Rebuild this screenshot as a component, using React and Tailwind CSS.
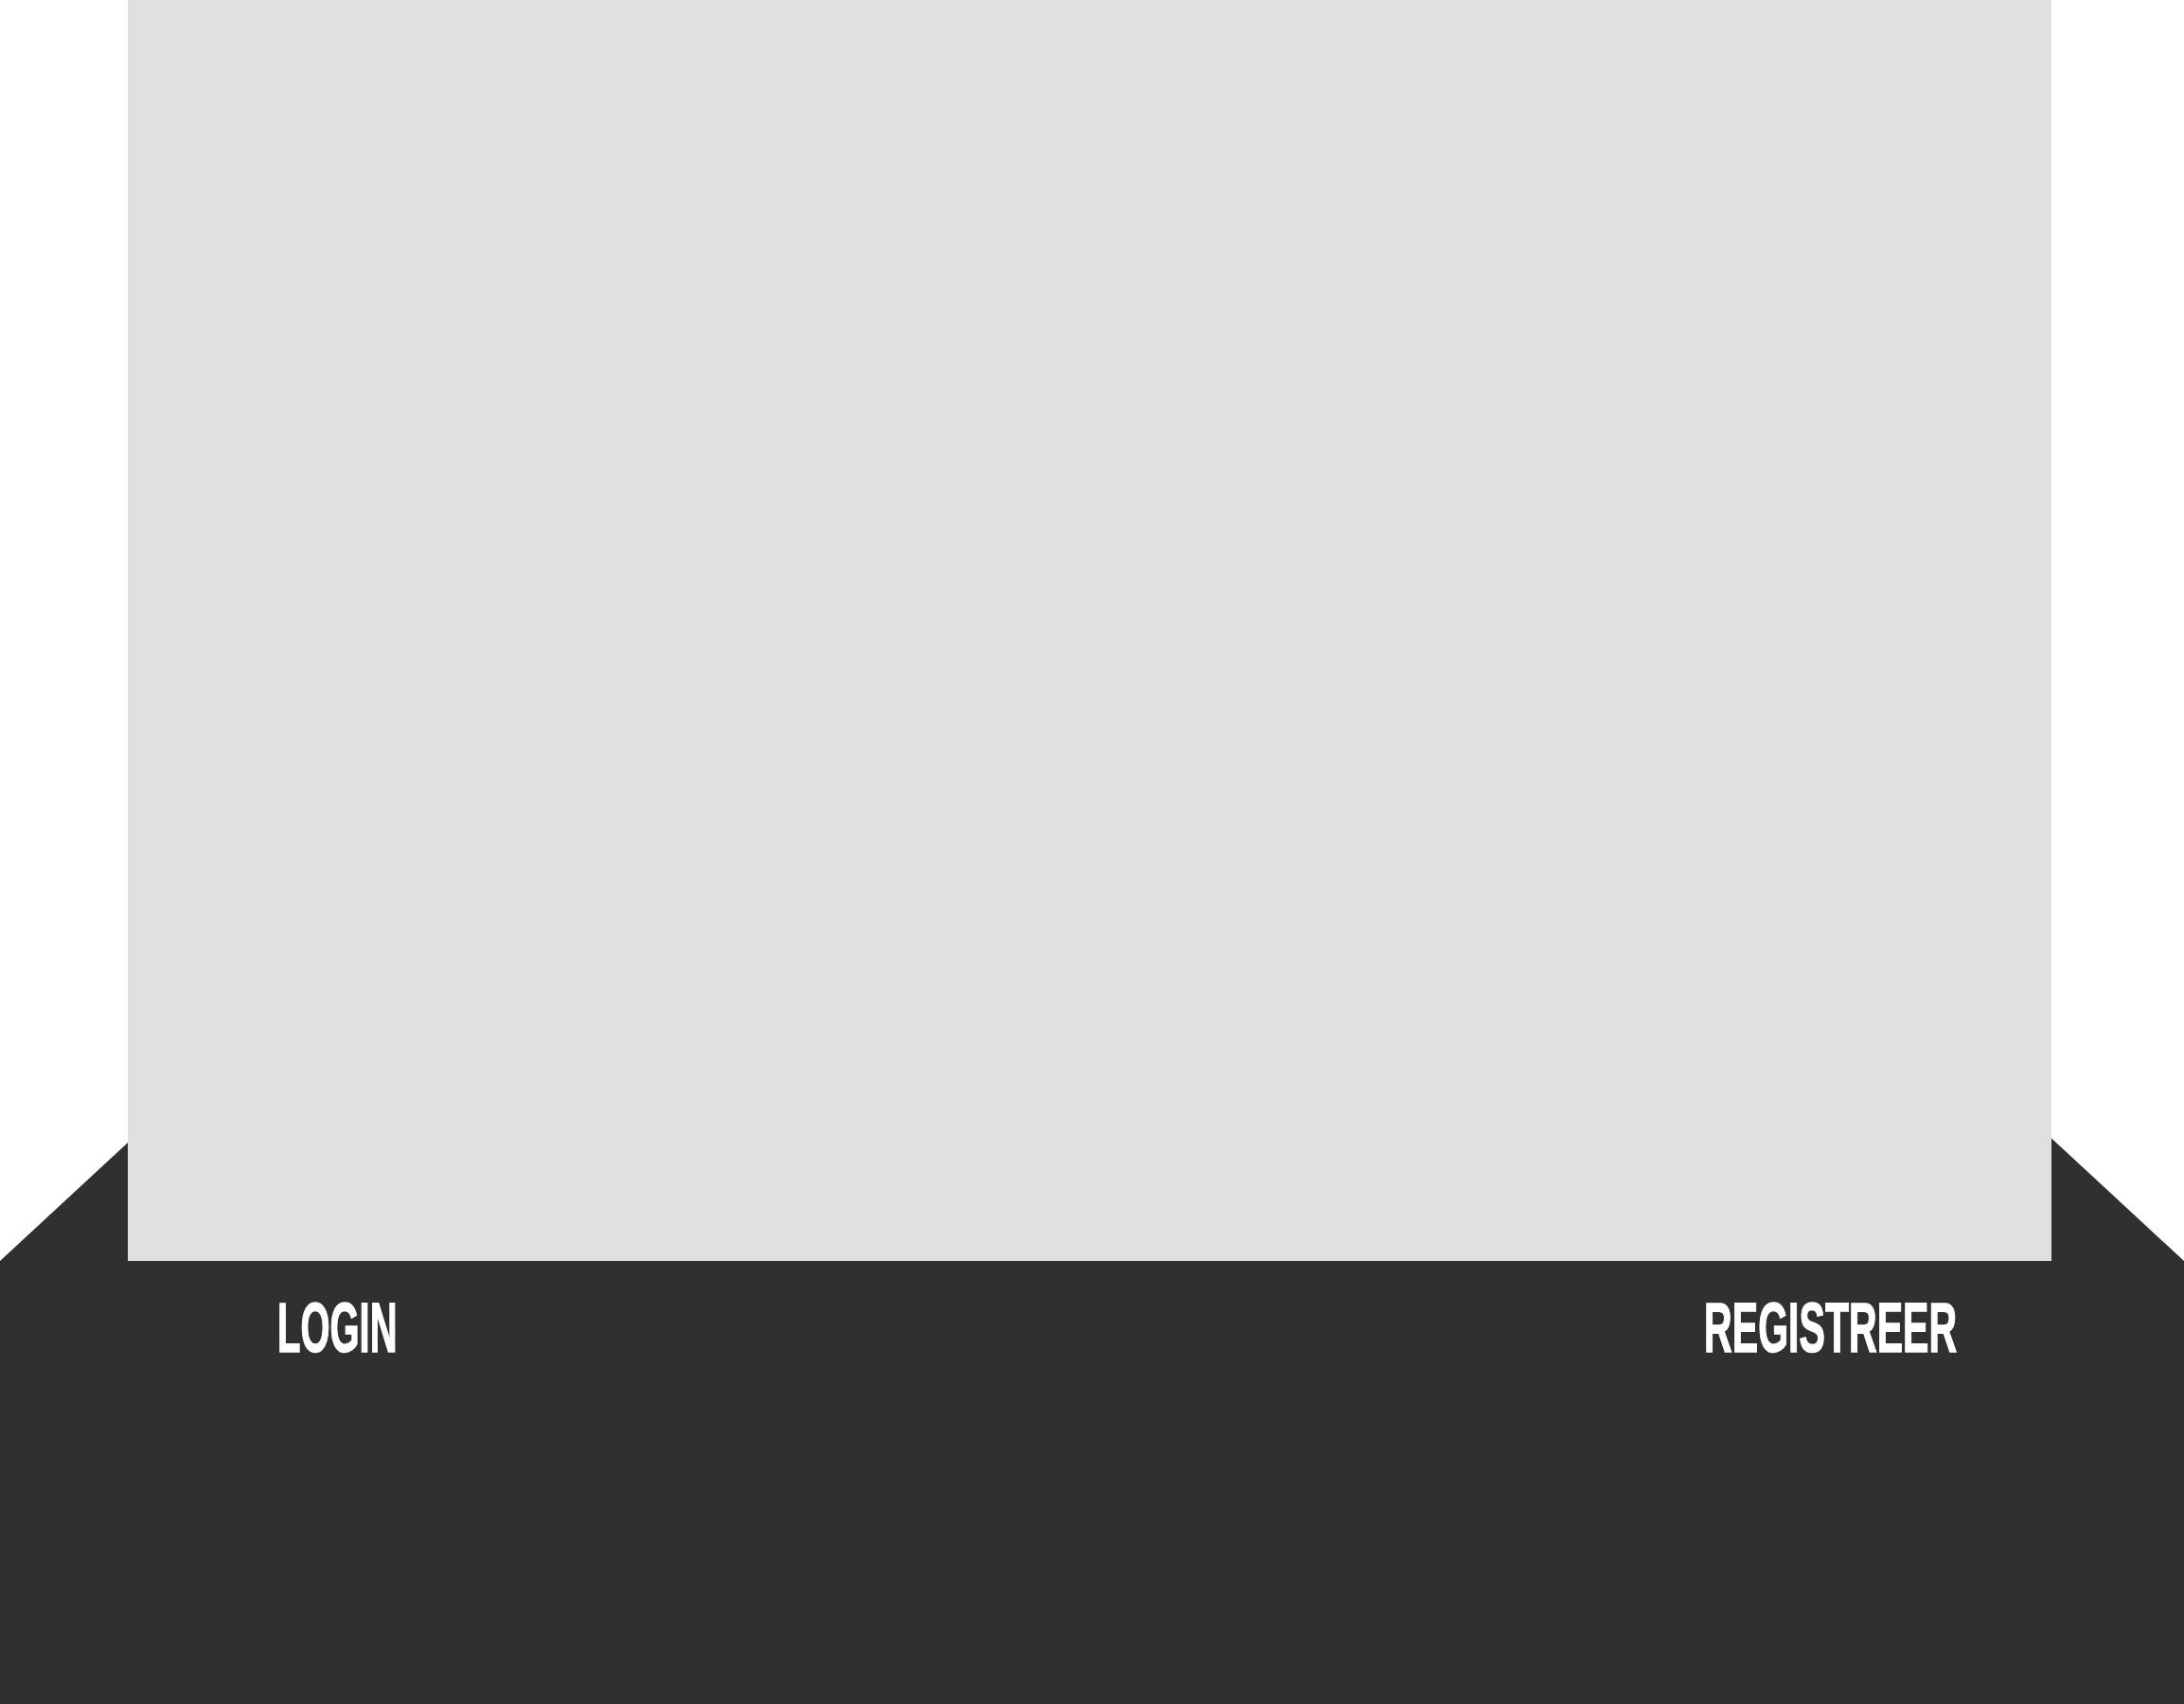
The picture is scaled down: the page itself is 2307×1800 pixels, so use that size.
export default function App() {
  return (
    <div className="relative w-full h-[1800px] overflow-hidden bg-white">
      {/* roof shape behind the panel */}
      <div className="absolute inset-0 bg-[#303030] [clip-path:polygon(0_1332px,50%_264px,100%_1332px,100%_100%,0_100%)]" />

      <div className="relative flex flex-col h-full">
        <div className="ml-[135px] w-[2032px] h-[1332px] bg-[#e0e0e0]" />

        <div className="flex-1 bg-[#303030] flex justify-between items-start pt-[39px] pl-[293px] pr-[240px]">
          <a className="inline-block text-white font-bold text-[74px] leading-[64px] uppercase font-['Liberation_Sans',sans-serif] [-webkit-text-stroke:1.5px_white] scale-x-[0.54] origin-left whitespace-nowrap">
            Login
          </a>
          <a className="inline-block text-white font-bold text-[74px] leading-[64px] uppercase font-['Liberation_Sans',sans-serif] [-webkit-text-stroke:1.5px_white] scale-x-[0.555] origin-right whitespace-nowrap">
            Registreer
          </a>
        </div>
      </div>
    </div>
  );
}
